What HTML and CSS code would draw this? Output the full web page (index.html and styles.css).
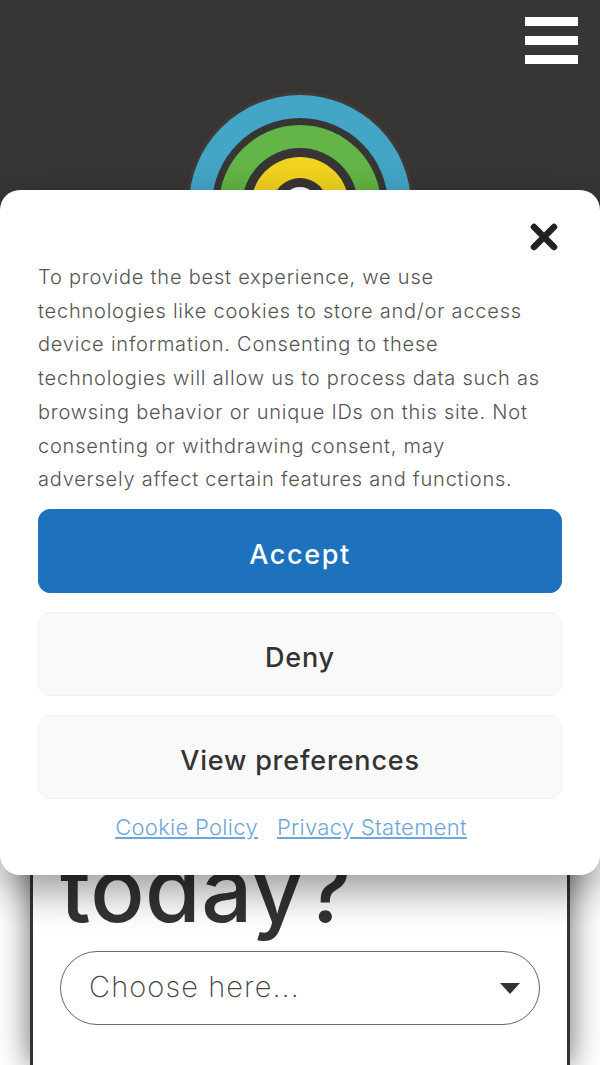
FILE: index.html
```html
<!DOCTYPE html>
<html lang="en">
<head>
    <meta charset="UTF-8">
    <meta name="viewport" content="width=device-width, initial-scale=1.0">
    <title>Get started</title>
    <link rel="stylesheet" href="styles.css">
</head>
<body>

<header class="site-header">
    <button class="menu-toggle" type="button" aria-label="Menu">
        <span class="menu-bar"></span>
        <span class="menu-bar"></span>
        <span class="menu-bar"></span>
    </button>
    <!-- Rainbow logo -->
    <svg class="logo" width="240" height="240" viewBox="0 0 240 240" aria-hidden="true">
        <circle cx="120" cy="120" r="114" fill="#403a38"/>
        <circle cx="120" cy="120" r="111" fill="#43a6c6"/>
        <circle cx="120" cy="120" r="88" fill="#383635"/>
        <circle cx="120" cy="120" r="81" fill="#62b546"/>
        <circle cx="120" cy="120" r="58" fill="#383635"/>
        <circle cx="120" cy="120" r="49" fill="#f2d31f"/>
        <circle cx="120" cy="120" r="28" fill="#383635"/>
        <circle cx="120" cy="120" r="19" fill="#ffffff"/>
    </svg>
</header>

<main class="page">
    <section class="card">
        <h1 class="card-title">today?</h1>
        <div class="fake-select">
            <span>Choose here...</span>
            <svg class="select-arrow" width="22" height="12" viewBox="0 0 22 12" aria-hidden="true">
                <path d="M1 1h20L11 12z" fill="#333"/>
            </svg>
        </div>
    </section>
</main>

<!-- Cookie consent dialog -->
<div class="consent">
    <div class="consent-top">
        <button class="consent-close" type="button" aria-label="Close">
            <svg width="28" height="28" viewBox="0 0 28 28" aria-hidden="true">
                <path d="M4 4l20 20M24 4L4 24" stroke="#222" stroke-width="6.5" stroke-linecap="round"/>
            </svg>
        </button>
    </div>
    <p class="consent-text">To provide the best experience, we use technologies like cookies to store and/or access device information. Consenting to these technologies will allow us to process data such as browsing behavior or unique IDs on this site. Not consenting or withdrawing consent, may adversely affect certain features and functions.</p>
    <div class="consent-buttons">
        <button class="btn btn-accept" type="button">Accept</button>
        <button class="btn" type="button">Deny</button>
        <button class="btn" type="button">View preferences</button>
    </div>
    <div class="consent-links">
        <a href="#">Cookie Policy</a>
        <a href="#">Privacy Statement</a>
    </div>
</div>

</body>
</html>
```

FILE: styles.css
```css
html, body {
    margin: 0;
    height: 1065px;
    overflow: hidden;
}
body {
    position: relative;
    font-family: Inter, "Liberation Sans", sans-serif;
    background-color: #fff;
    color: #333;
}
button {
    font-family: inherit;
    cursor: pointer;
}

.site-header {
    height: 320px;
    background-color: #383635;
    display: flex;
    justify-content: center;
    padding-top: 86px;
    box-sizing: border-box;
}
.logo {
    display: block;
}
.menu-toggle {
    position: absolute;
    top: 17px;
    right: 22px;
    width: 53px;
    padding: 0;
    border: none;
    background: none;
    display: flex;
    flex-direction: column;
    gap: 10px;
}
.menu-bar {
    display: block;
    height: 9px;
    background-color: #fff;
}

.page {
    padding: 0 30px;
}
.card {
    height: 745px;
    box-sizing: border-box;
    padding: 522px 27px 0;
    border: 3px solid #333;
    border-top: none;
    border-bottom: none;
    background-color: #fff;
    box-shadow: 0 0 30px rgba(0, 0, 0, 0.6);
}
.card-title {
    margin: 0 0 13px;
    font-size: 90px;
    line-height: 96px;
    font-weight: 500;
    letter-spacing: 0.5px;
    color: #333;
}
.fake-select {
    height: 74px;
    box-sizing: border-box;
    border: 1px solid #5f6b78;
    border-radius: 37px;
    padding: 0 18px 3px 28px;
    display: flex;
    align-items: center;
    justify-content: space-between;
    font-size: 29px;
    font-weight: 200;
    letter-spacing: 1.1px;
    color: #444;
}
.select-arrow {
    margin-top: 3px;
}

.consent {
    position: absolute;
    top: 190px;
    left: 0;
    right: 0;
    height: 685px;
    box-sizing: border-box;
    padding: 0 38px;
    background-color: #fff;
    border-radius: 20px;
    box-shadow: 0 16px 40px rgba(0, 0, 0, 0.4);
}
.consent-top {
    display: flex;
    justify-content: flex-end;
    padding-top: 33px;
}
.consent-close {
    width: 28px;
    height: 28px;
    padding: 0;
    margin-right: 4px;
    border: none;
    background: none;
}
.consent-close svg {
    display: block;
}
.consent-text {
    margin: 10px 0 0;
    max-width: 507px;
    font-size: 20px;
    font-weight: 300;
    line-height: 33.7px;
    letter-spacing: 0.78px;
    color: #555;
}
.consent-buttons {
    display: flex;
    flex-direction: column;
    gap: 19px;
    margin-top: 12px;
}
.btn {
    height: 84px;
    padding: 8px 0 0;
    border: 1px solid #f2f2f2;
    border-radius: 12px;
    background-color: #f9f9f9;
    color: #333;
    font-size: 27px;
    font-weight: 500;
    letter-spacing: 0.8px;
}
.btn-accept {
    border-color: #1e71bc;
    background-color: #1e71bc;
    color: #fff;
    letter-spacing: 1.6px;
}
.consent-links {
    display: flex;
    justify-content: center;
    gap: 19px;
    margin-top: 14px;
    padding-right: 18px;
    font-size: 22px;
    font-weight: 300;
    line-height: 28px;
    letter-spacing: 0.3px;
}
.consent-links a {
    color: #6ea6da;
}
```
